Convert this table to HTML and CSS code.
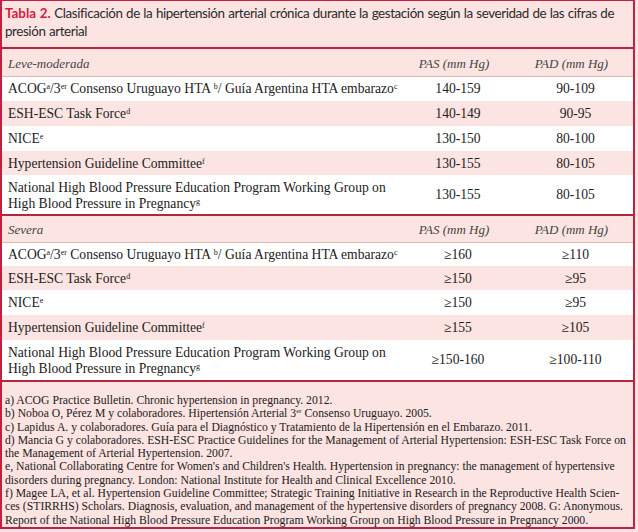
FILE: index.html
```html
<!DOCTYPE html>
<html lang="es">
<head>
<meta charset="utf-8">
<link rel="stylesheet" href="styles.css">
</head>
<body>
<div class="box">
  <div class="title"><span class="tlabel">Tabla 2.</span> Clasificación de la hipertensión arterial crónica durante la gestación según la severidad de las cifras de presión arterial</div>
  <table class="tbl">
    <colgroup><col class="c1"><col class="c2"><col class="c3"></colgroup>
    <tr class="head"><td class="hl">Leve-moderada</td><td class="hv">PAS (mm Hg)</td><td class="hv">PAD (mm Hg)</td></tr>
    <tr class="w first"><td>ACOG<sup>a</sup>/3<sup>er</sup> Consenso Uruguayo HTA <sup>b</sup>/ Guía Argentina HTA embarazo<sup>c</sup></td><td class="v">140-159</td><td class="v">90-109</td></tr>
    <tr class="p"><td>ESH-ESC Task Force<sup>d</sup></td><td class="v">140-149</td><td class="v">90-95</td></tr>
    <tr class="w"><td>NICE<sup>e</sup></td><td class="v">130-150</td><td class="v">80-100</td></tr>
    <tr class="p short"><td>Hypertension Guideline Committee<sup>f</sup></td><td class="v">130-155</td><td class="v">80-105</td></tr>
    <tr class="w two"><td>National High Blood Pressure Education Program Working Group on High Blood Pressure in Pregnancy<sup>g</sup></td><td class="v">130-155</td><td class="v">80-105</td></tr>
    <tr class="head sep"><td class="hl">Severa</td><td class="hv">PAS (mm Hg)</td><td class="hv">PAD (mm Hg)</td></tr>
    <tr class="w first short"><td>ACOG<sup>a</sup>/3<sup>er</sup> Consenso Uruguayo HTA <sup>b</sup>/ Guía Argentina HTA embarazo<sup>c</sup></td><td class="v">≥160</td><td class="v">≥110</td></tr>
    <tr class="p short"><td>ESH-ESC Task Force<sup>d</sup></td><td class="v">≥150</td><td class="v">≥95</td></tr>
    <tr class="w"><td>NICE<sup>e</sup></td><td class="v">≥150</td><td class="v">≥95</td></tr>
    <tr class="p"><td>Hypertension Guideline Committee<sup>f</sup></td><td class="v">≥155</td><td class="v">≥105</td></tr>
    <tr class="w two"><td>National High Blood Pressure Education Program Working Group on High Blood Pressure in Pregnancy<sup>g</sup></td><td class="v">≥150-160</td><td class="v">≥100-110</td></tr>
  </table>
  <div class="notes">
    <p>a) ACOG Practice Bulletin. Chronic hypertension in pregnancy. 2012.</p>
    <p>b) Noboa O, Pérez M y colaboradores. Hipertensión Arterial 3<sup>er</sup> Consenso Uruguayo. 2005.</p>
    <p>c) Lapidus A. y colaboradores. Guía para el Diagnóstico y Tratamiento de la Hipertensión en el Embarazo. 2011.</p>
    <p>d) Mancia G y colaboradores. ESH-ESC Practice Guidelines for the Management of Arterial Hypertension: ESH-ESC Task Force on the Management of Arterial Hypertension. 2007.</p>
    <p>e, National Collaborating Centre for Women's and Children's Health. Hypertension in pregnancy: the management of hypertensive disorders during pregnancy. London: National Institute for Health and Clinical Excellence 2010.</p>
    <p>f) Magee LA, et al. Hypertension Guideline Committee; Strategic Training Initiative in Research in the Reproductive Health Scien­ces (STIRRHS) Scholars. Diagnosis, evaluation, and management of the hypertensive disorders of pregnancy 2008. G: Anonymous. Report of the National High Blood Pressure Education Program Working Group on High Blood Pressure in Pregnancy 2000.</p>
  </div>
</div>
</body>
</html>
```
FILE: styles.css
```css
html, body {
  margin: 0;
  padding: 0;
  background: #fbe4e1;
}
.box {
  box-sizing: border-box;
  width: 635px;
  height: 529px;
  border: 2px solid #c41f3e;
  border-top-width: 1px;
  background: #fbe4e1;
  color: #222;
  overflow: hidden;
}
.title {
  font-family: Lato, "Open Sans", sans-serif;
  font-size: 13.4px;
  letter-spacing: -0.4px;
  word-spacing: 0.5px;
  line-height: 18px;
  color: #2b2b2b;
  padding: 3px 4px 7px 3px;
  border-bottom: 2px solid #c41f3e;
}
.tlabel {
  color: #d0213f;
  font-weight: bold;
  letter-spacing: 0;
}
.tbl {
  width: 100%;
  border-collapse: collapse;
  font-family: "Liberation Serif", serif;
  font-size: 13.6px;
  color: #222;
}
.c1 { width: 396px; }
.c2 { width: 120px; }
.tbl td {
  padding: 0 0 0 6px;
  height: 25px;
  box-sizing: border-box;
  vertical-align: middle;
  line-height: 15px;
}
.tbl td.v {
  text-align: center;
  padding: 0;
}
tr.short td { height: 24px; }
.head td {
  height: 27px;
  font-style: italic;
  color: #444;
  font-size: 13px;
  padding-top: 2px;
}
.head td.hv {
  text-align: center;
  padding: 2px 8px 0 0;
}
.head.sep {
  border-top: 2px solid #b32640;
}
tr.first {
  border-top: 1px solid #e3b7b4;
}
tr.w { background: #fff; }
tr.p { background: #fbe4e1; }
tr.two td { height: 40px; padding-top: 2px; line-height: 16px; }
sup {
  font-size: 8px;
  line-height: 0;
  vertical-align: 4px;
}
.notes {
  border-top: 2px solid #b32640;
  padding: 12px 4px 0 3px;
  font-family: "Liberation Serif", serif;
  font-size: 11.7px;
  line-height: 13.3px;
  color: #222;
}
.notes p {
  margin: 0;
}
.notes sup {
  font-size: 7px;
  vertical-align: 4px;
}
```
